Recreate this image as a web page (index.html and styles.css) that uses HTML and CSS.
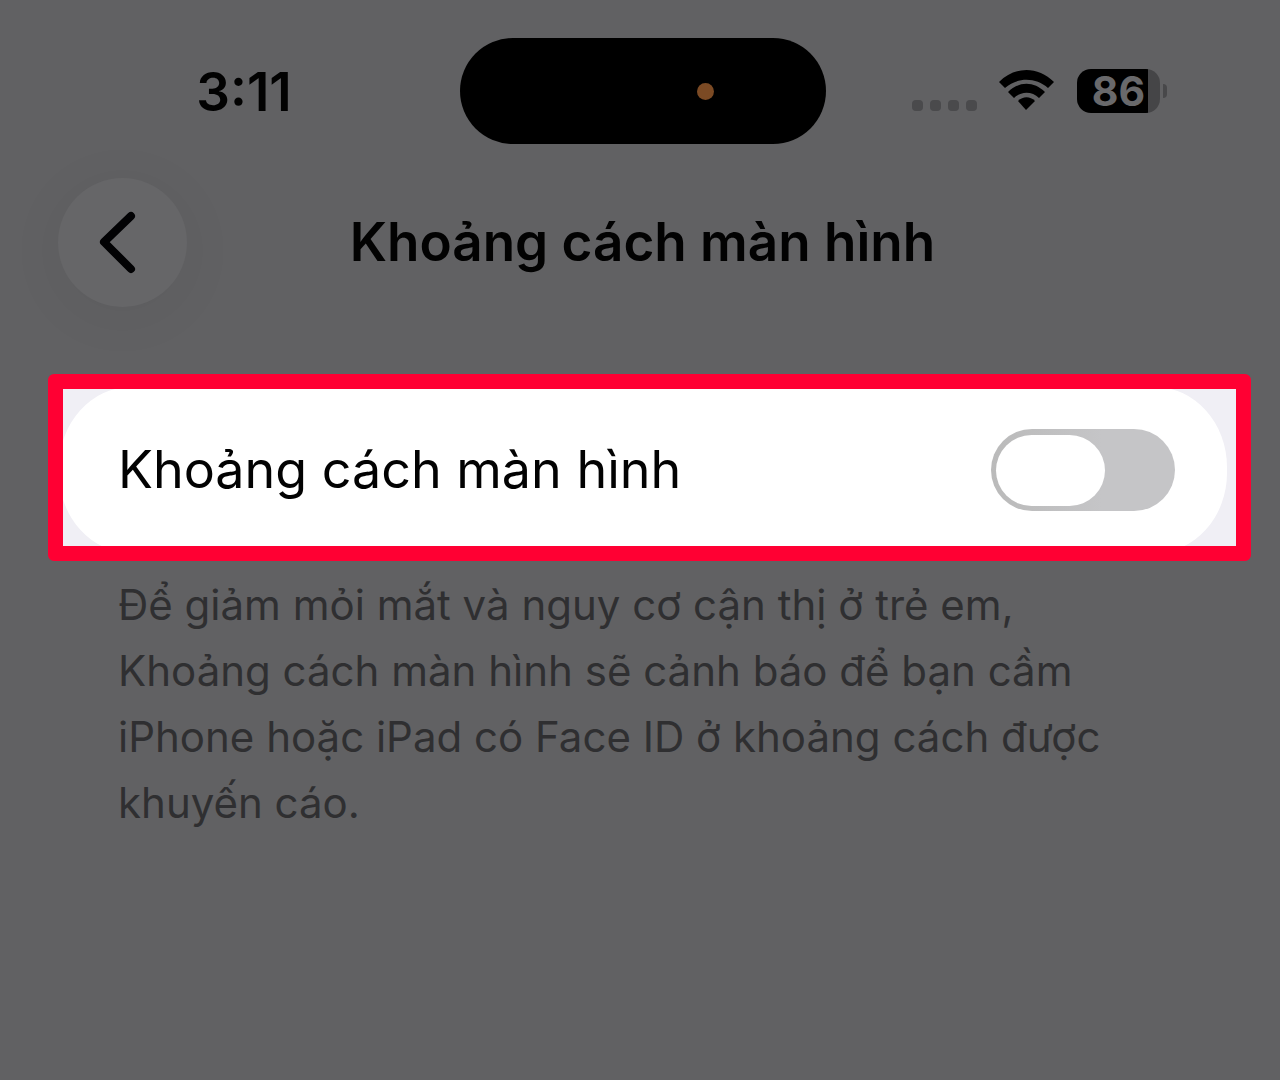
FILE: index.html
```html
<!DOCTYPE html>
<html lang="vi">
<head>
    <meta charset="UTF-8">
    <meta name="viewport" content="width=device-width, initial-scale=1.0">
    <title>Khoảng cách màn hình</title>
    <link rel="stylesheet" href="styles.css">
</head>
<body>
    <div class="status-bar">
        <span class="time">3:11</span>
        <div class="island"><span class="mic-dot"></span></div>
        <div class="status-icons">
            <div class="signal"><i></i><i></i><i></i><i></i></div>
            <svg class="wifi" width="56" height="42" viewBox="0 0 56 42">
                <path d="M0 12 C16 -4 39 -4 55 12 L49 18 C37 7 18 7 6 18 Z"/>
                <path d="M9 22 C20 11 35 11 46 22 L40 28 C33 21 22 21 15 28 Z"/>
                <path d="M19 31 C24 26 31 26 36 31 L27 40 Z"/>
            </svg>
            <div class="battery">
                <div class="battery-level">86</div>
                <span class="battery-cap"></span>
            </div>
        </div>
    </div>

    <header class="nav-bar">
        <button class="back" type="button" aria-label="Quay lại">
            <svg width="44" height="66" viewBox="0 0 44 66">
                <path d="M35 6 L8 32 L35 59"/>
            </svg>
        </button>
        <h1>Khoảng cách màn hình</h1>
    </header>

    <main>
        <div class="highlight">
            <div class="card">
                <label for="distance">Khoảng cách màn hình</label>
                <input type="checkbox" id="distance" class="switch" role="switch">
            </div>
        </div>
        <p class="description">Để giảm mỏi mắt và nguy cơ cận thị ở trẻ em, Khoảng cách màn hình sẽ cảnh báo để bạn cầm iPhone hoặc iPad có Face ID ở khoảng cách được khuyến cáo.</p>
    </main>
</body>
</html>
```
FILE: styles.css
```css
* {
    box-sizing: border-box;
}

body {
    margin: 0;
    min-height: 100vh;
    background-color: #616163;
    color: #020202;
    font-family: Inter, "Noto Sans", sans-serif;
}

/* Status bar */
.status-bar {
    display: grid;
    grid-template-columns: 1fr 366px 1fr;
    align-items: center;
    padding: 38px 0 0 6px;
}

.time {
    padding: 2px 0 0 22px;
    text-align: center;
    font-size: 53px;
    font-weight: 600;
    line-height: 60px;
}

.island {
    display: flex;
    align-items: center;
    justify-content: flex-end;
    height: 106px;
    padding-right: 112px;
    border-radius: 56px;
    background-color: #000;
}

.mic-dot {
    width: 17px;
    height: 17px;
    border-radius: 50%;
    background-color: #7b4a24;
}

.status-icons {
    display: flex;
    align-items: center;
    justify-content: flex-end;
    gap: 22px;
    padding-right: 113px;
}

.signal {
    display: flex;
    gap: 7px;
    padding-top: 28px;
}

.signal i {
    width: 11px;
    height: 11px;
    border-radius: 4px;
    background-color: #4a4a4c;
}

.wifi {
    fill: #000;
}

.battery {
    display: flex;
    align-items: center;
    gap: 3px;
}

.battery-level {
    width: 83px;
    height: 44px;
    border-radius: 14px;
    background: linear-gradient(to right, #000 71px, #454547 71px);
    color: #69696b;
    font-size: 41px;
    font-weight: 700;
    line-height: 44px;
    text-align: center;
}

.battery-cap {
    width: 4px;
    height: 14px;
    border-radius: 0 4px 4px 0;
    background-color: #48484a;
}

/* Navigation bar */
.nav-bar {
    display: grid;
    grid-template-columns: 129px 1fr 129px;
    align-items: center;
    padding: 34px 53px 0 58px;
}

.back {
    display: flex;
    align-items: center;
    justify-content: center;
    width: 129px;
    height: 129px;
    padding: 0 10px 0 0;
    border: none;
    border-radius: 50%;
    background-color: #666668;
    box-shadow: 0 8px 60px rgba(0, 0, 0, 0.05);
    cursor: pointer;
}

.back path {
    fill: none;
    stroke: #020204;
    stroke-width: 8;
    stroke-linecap: round;
    stroke-linejoin: round;
}

h1 {
    margin: 0;
    padding-bottom: 2px;
    font-size: 53px;
    font-weight: 600;
    line-height: 66px;
    text-align: center;
}

/* Setting row */
main {
    padding: 67px 29px 0 48px;
}

.highlight {
    display: flex;
    height: 187px;
    border: 15px solid #ff0033;
    border-radius: 6px;
    background-color: #f0eff5;
    overflow: hidden;
}

.card {
    display: flex;
    flex: 1;
    align-items: center;
    justify-content: space-between;
    margin: -2px 9px -7px -4px;
    padding: 0 52px 0 59px;
    border-radius: 72px / 80px;
    background-color: #fff;
}

.card label {
    font-size: 52px;
    line-height: 66px;
}

.switch {
    appearance: none;
    display: flex;
    align-items: center;
    width: 184px;
    height: 82px;
    margin: 0;
    padding: 5px;
    border-radius: 41px;
    background: linear-gradient(to right, #bababa, #c5c5c7 60%);
    cursor: pointer;
}

.switch::before {
    content: "";
    width: 109px;
    height: 71px;
    border-radius: 36px;
    background-color: #fff;
}

.switch:checked {
    justify-content: flex-end;
    background: #34c759;
}

.description {
    margin: 11px 110px 0 70px;
    color: #2f2f31;
    font-size: 42px;
    line-height: 66px;
}
```
